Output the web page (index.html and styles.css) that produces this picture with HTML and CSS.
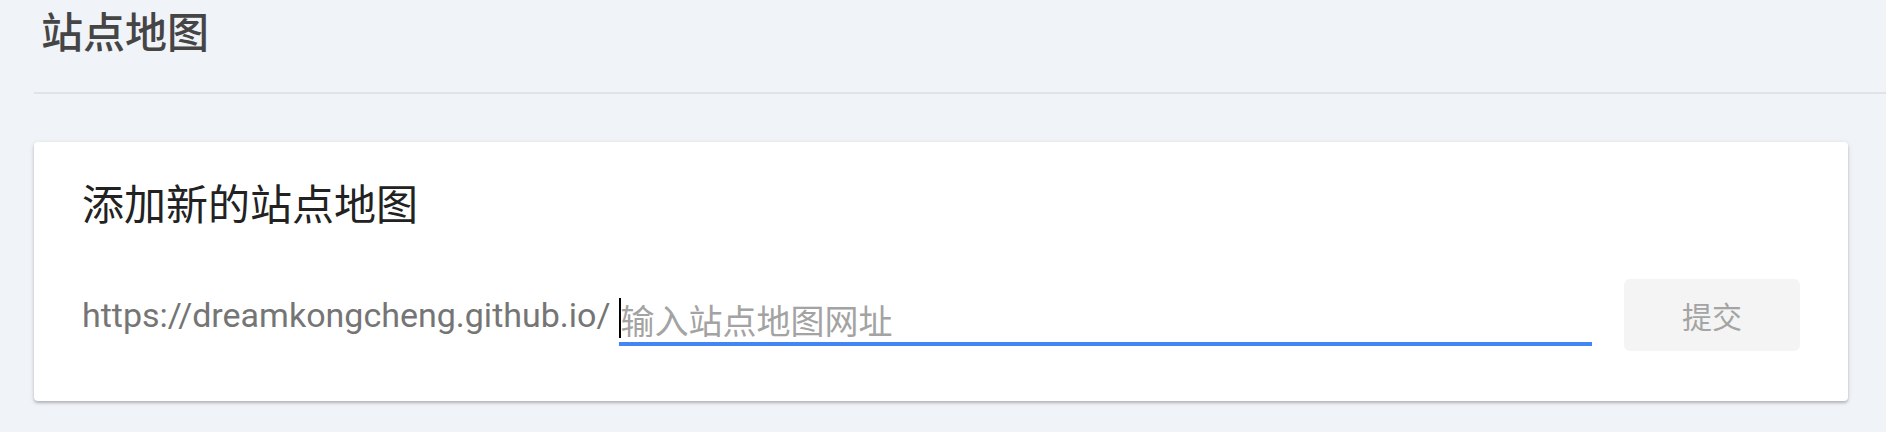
FILE: index.html
```html
<!DOCTYPE html>
<html lang="zh-CN">
<head>
<meta charset="utf-8">
<title>站点地图</title>
<link rel="stylesheet" href="styles.css">
</head>
<body>
<div class="page">
  <header class="page-head">
    <h1 class="page-title">站点地图</h1>
  </header>
  <section class="card">
    <h2 class="card-title">添加新的站点地图</h2>
    <form class="sitemap-form">
      <span class="prefix">https://dreamkongcheng.github.io/</span>
      <div class="field">
        <span class="caret"></span>
        <input class="field-input" type="text" placeholder="输入站点地图网址">
      </div>
      <button class="submit" type="button">提交</button>
    </form>
  </section>
</div>
</body>
</html>
```
FILE: styles.css
```css
html, body {
  margin: 0;
  padding: 0;
  background: #f0f3f8;
}
body {
  font-family: "Roboto", "Noto Sans CJK SC", sans-serif;
  width: 1886px;
  height: 432px;
  overflow: hidden;
}
.page {
  padding-left: 34px;
}
.page-head {
  height: 92px;
  border-bottom: 2px solid #e2e3e4;
  box-sizing: content-box;
}
.page-title {
  margin: 0;
  padding-left: 7px;
  font-family: "Noto Sans CJK SC", sans-serif;
  font-size: 42px;
  font-weight: 500;
  line-height: 60px;
  color: #454545;
}
.card {
  margin-top: 48px;
  width: 1814px;
  height: 259px;
  box-sizing: border-box;
  background: #fff;
  border-radius: 4px;
  box-shadow: 0 2px 3px rgba(0,0,0,0.22), 0 1px 6px rgba(0,0,0,0.08);
  padding: 30px 48px 0 48px;
}
.card-title {
  margin: 0;
  font-family: "Noto Sans CJK SC", sans-serif;
  font-size: 42px;
  font-weight: 400;
  line-height: 60px;
  color: #222;
}
.sitemap-form {
  margin-top: 47px;
  display: flex;
  align-items: center;
  height: 72px;
}
.prefix {
  font-size: 34px;
  color: #757575;
  margin-right: 9px;
  white-space: nowrap;
}
.field {
  position: relative;
  flex: 1;
  margin-right: 32px;
  margin-top: 14px;
  border-bottom: 4px solid #4285f4;
  height: 48px;
  box-sizing: border-box;
  display: flex;
  align-items: flex-end;
}
.caret {
  position: absolute;
  left: 0;
  top: 0;
  width: 2px;
  height: 40px;
  background: #000;
}
.field-input {
  flex: 1;
  border: 0;
  outline: none;
  background: transparent;
  padding: 0 0 0 1px;
  margin: 0;
  font-family: "Noto Sans CJK SC", sans-serif;
  font-size: 34px;
  line-height: 44px;
  height: 44px;
  color: #333;
}
.field-input::placeholder {
  color: #a3a3a3;
}
.submit {
  width: 176px;
  height: 72px;
  border: 0;
  border-radius: 6px;
  background: #f4f4f4;
  color: #a4a4a4;
  font-family: "Noto Sans CJK SC", sans-serif;
  font-size: 30px;
  padding: 0;
}
```
